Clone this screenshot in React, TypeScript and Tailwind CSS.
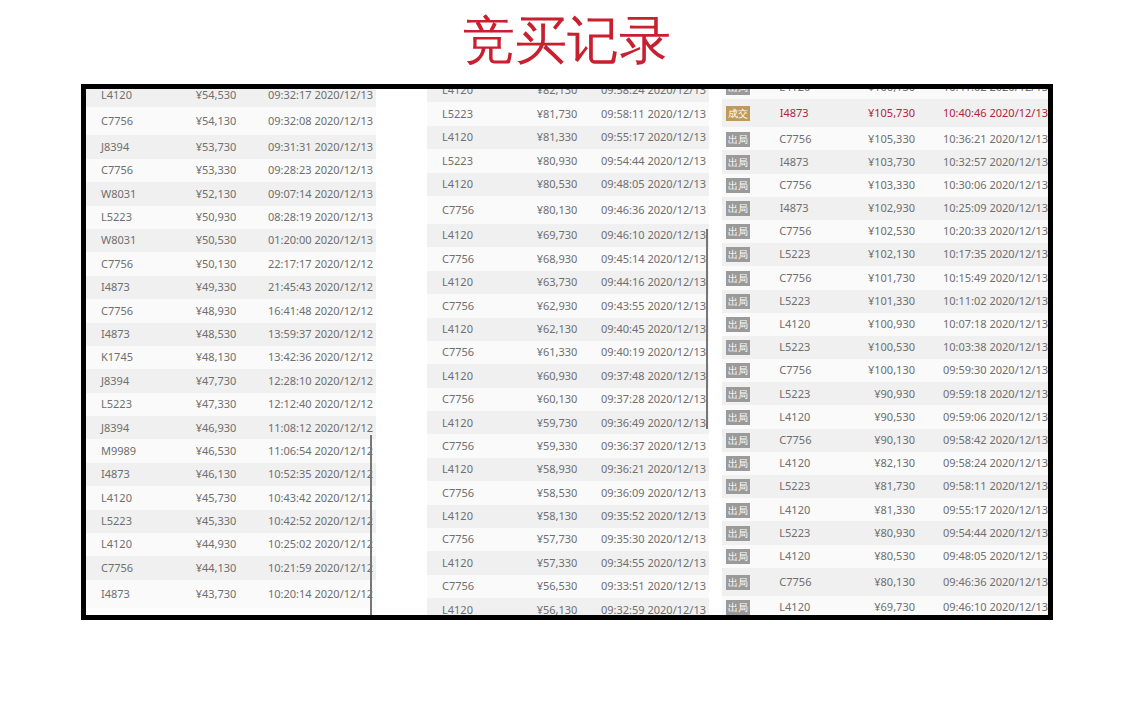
const p1: [string, string, string, boolean?][] = [
  ["L4120", "¥54,530", "09:32:17 2020/12/13"],
  ["C7756", "¥54,130", "09:32:08 2020/12/13", true],
  ["J8394", "¥53,730", "09:31:31 2020/12/13"],
  ["C7756", "¥53,330", "09:28:23 2020/12/13"],
  ["W8031", "¥52,130", "09:07:14 2020/12/13"],
  ["L5223", "¥50,930", "08:28:19 2020/12/13"],
  ["W8031", "¥50,530", "01:20:00 2020/12/13"],
  ["C7756", "¥50,130", "22:17:17 2020/12/12"],
  ["I4873", "¥49,330", "21:45:43 2020/12/12"],
  ["C7756", "¥48,930", "16:41:48 2020/12/12"],
  ["I4873", "¥48,530", "13:59:37 2020/12/12"],
  ["K1745", "¥48,130", "13:42:36 2020/12/12"],
  ["J8394", "¥47,730", "12:28:10 2020/12/12"],
  ["L5223", "¥47,330", "12:12:40 2020/12/12"],
  ["J8394", "¥46,930", "11:08:12 2020/12/12"],
  ["M9989", "¥46,530", "11:06:54 2020/12/12"],
  ["I4873", "¥46,130", "10:52:35 2020/12/12"],
  ["L4120", "¥45,730", "10:43:42 2020/12/12"],
  ["L5223", "¥45,330", "10:42:52 2020/12/12"],
  ["L4120", "¥44,930", "10:25:02 2020/12/12"],
  ["C7756", "¥44,130", "10:21:59 2020/12/12"],
  ["I4873", "¥43,730", "10:20:14 2020/12/12", true],
];

const p2: [string, string, string, boolean?][] = [
  ["L4120", "¥82,130", "09:58:24 2020/12/13"],
  ["L5223", "¥81,730", "09:58:11 2020/12/13"],
  ["L4120", "¥81,330", "09:55:17 2020/12/13"],
  ["L5223", "¥80,930", "09:54:44 2020/12/13"],
  ["L4120", "¥80,530", "09:48:05 2020/12/13"],
  ["C7756", "¥80,130", "09:46:36 2020/12/13", true],
  ["L4120", "¥69,730", "09:46:10 2020/12/13"],
  ["C7756", "¥68,930", "09:45:14 2020/12/13"],
  ["L4120", "¥63,730", "09:44:16 2020/12/13"],
  ["C7756", "¥62,930", "09:43:55 2020/12/13"],
  ["L4120", "¥62,130", "09:40:45 2020/12/13"],
  ["C7756", "¥61,330", "09:40:19 2020/12/13"],
  ["L4120", "¥60,930", "09:37:48 2020/12/13"],
  ["C7756", "¥60,130", "09:37:28 2020/12/13"],
  ["L4120", "¥59,730", "09:36:49 2020/12/13"],
  ["C7756", "¥59,330", "09:36:37 2020/12/13"],
  ["L4120", "¥58,930", "09:36:21 2020/12/13"],
  ["C7756", "¥58,530", "09:36:09 2020/12/13"],
  ["L4120", "¥58,130", "09:35:52 2020/12/13"],
  ["C7756", "¥57,730", "09:35:30 2020/12/13"],
  ["L4120", "¥57,330", "09:34:55 2020/12/13"],
  ["C7756", "¥56,530", "09:33:51 2020/12/13"],
  ["L4120", "¥56,130", "09:32:59 2020/12/13"],
];

const p3: [string, string, string, boolean?][] = [
  ["L4120", "¥106,130", "10:41:02 2020/12/13"],
  ["I4873", "¥105,730", "10:40:46 2020/12/13", true],
  ["C7756", "¥105,330", "10:36:21 2020/12/13"],
  ["I4873", "¥103,730", "10:32:57 2020/12/13"],
  ["C7756", "¥103,330", "10:30:06 2020/12/13"],
  ["I4873", "¥102,930", "10:25:09 2020/12/13"],
  ["C7756", "¥102,530", "10:20:33 2020/12/13"],
  ["L5223", "¥102,130", "10:17:35 2020/12/13"],
  ["C7756", "¥101,730", "10:15:49 2020/12/13"],
  ["L5223", "¥101,330", "10:11:02 2020/12/13"],
  ["L4120", "¥100,930", "10:07:18 2020/12/13"],
  ["L5223", "¥100,530", "10:03:38 2020/12/13"],
  ["C7756", "¥100,130", "09:59:30 2020/12/13"],
  ["L5223", "¥90,930", "09:59:18 2020/12/13"],
  ["L4120", "¥90,530", "09:59:06 2020/12/13"],
  ["C7756", "¥90,130", "09:58:42 2020/12/13"],
  ["L4120", "¥82,130", "09:58:24 2020/12/13"],
  ["L5223", "¥81,730", "09:58:11 2020/12/13"],
  ["L4120", "¥81,330", "09:55:17 2020/12/13"],
  ["L5223", "¥80,930", "09:54:44 2020/12/13"],
  ["L4120", "¥80,530", "09:48:05 2020/12/13"],
  ["C7756", "¥80,130", "09:46:36 2020/12/13", true],
  ["L4120", "¥69,730", "09:46:10 2020/12/13"],
];

function Simple({ rows, top, scroll }: { rows: typeof p1; top: string; scroll: string }) {
  return (
    <div className="relative h-full w-full overflow-hidden">
      <div className={`flex flex-col ${top}`}>
        {rows.map((r, i) => (
          <div
            key={i}
            className={`flex shrink-0 items-center whitespace-nowrap text-[11px] text-[#6f6f6f] ${r[3] ? "h-[28px]" : "h-[23.4px]"} ${i % 2 ? "bg-[#fafafa]" : "bg-[#f0f0f0]"}`}
          >
            <span className="w-[90px] pl-[15px]">{r[0]}</span>
            <span className="w-[80px] text-center">{r[1]}</span>
            <span className="flex-1 pr-[3px] text-right">{r[2]}</span>
          </div>
        ))}
      </div>
      <div className={`absolute w-[2px] bg-[#777] ${scroll}`} />
    </div>
  );
}

export default function App() {
  return (
    <div className="flex h-[702px] w-[1134px] flex-col items-center bg-white [font-family:'Liberation_Sans','Noto_Sans_CJK_SC',sans-serif]">
      <h1 className="mt-[6px] h-[78px] text-[52px] leading-[64px] text-[#c8202f] [font-family:'Noto_Sans_CJK_SC',sans-serif]">竞买记录</h1>
      <div className="ml-[0px] flex h-[536px] w-[972px] border-[5px] border-black bg-white">
        <div className="h-full w-[290px]">
          <Simple rows={p1} top="-mt-[5px]" scroll="right-[4px] top-[346px] h-[180px]" />
        </div>
        <div className="w-[51px]" />
        <div className="h-full w-[282px]">
          <Simple rows={p2} top="-mt-[10px]" scroll="right-[1px] top-[140px] h-[200px]" />
        </div>
        <div className="w-[13px]" />
        <div className="h-full flex-1 overflow-hidden">
          <div className="-mt-[13px] flex flex-col">
            {p3.map((r, i) => {
              const win = i === 1;
              return (
                <div
                  key={i}
                  className={`flex shrink-0 items-center whitespace-nowrap text-[11px] ${win ? "text-[#b0263a]" : "text-[#6f6f6f]"} ${r[3] ? "h-[28px]" : "h-[23.2px]"} ${i % 2 ? "bg-[#f0f0f0]" : "bg-[#fafafa]"}`}
                >
                  <span className="w-[60px] pl-[4px]">
                    <span className={`inline-block px-[2px] text-[10px] leading-[15px] text-white [font-family:'Noto_Sans_CJK_SC',sans-serif] ${win ? "bg-[#c09a5b]" : "bg-[#9a9a9a]"}`}>
                      {win ? "成交" : "出局"}
                    </span>
                  </span>
                  <span className="w-[30px] text-center">{r[0]}</span>
                  <span className="w-[125px] pr-[14px] text-right">{r[1]}</span>
                  <span className="pl-[14px]">{r[2]}</span>
                </div>
              );
            })}
          </div>
        </div>
      </div>
    </div>
  );
}
